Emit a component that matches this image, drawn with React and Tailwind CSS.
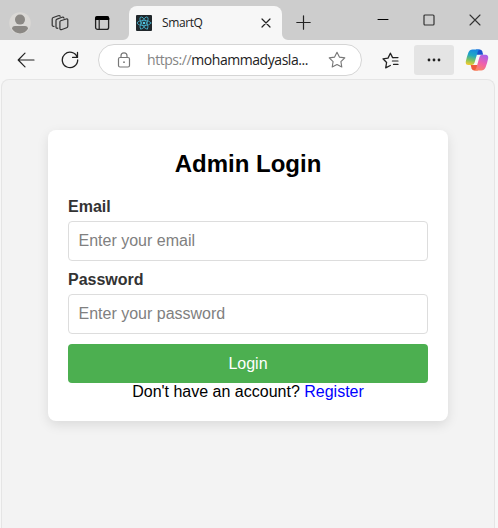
import React from "react";

function Icon({ w, h, className = "", children }) {
  return (
    <svg
      width={w}
      height={h}
      viewBox={`0 0 ${w} ${h}`}
      fill="none"
      stroke="currentColor"
      strokeLinecap="round"
      strokeLinejoin="round"
      className={"shrink-0 " + className}
    >
      {children}
    </svg>
  );
}

function Avatar() {
  return (
    <Icon w={22} h={22} className="ml-[9px]">
      <circle cx="11" cy="11" r="10.8" fill="#dad8d5" stroke="none" />
      <circle cx="11" cy="7.6" r="5" fill="#8b8884" stroke="none" />
      <path d="M3 16.8Q3 13.9 6 13.9h10q3 0 3 2.9A10.5 10.5 0 0 1 11 21.6a10.5 10.5 0 0 1-8-4.8Z" fill="#8b8884" stroke="none" />
    </Icon>
  );
}

function Workspaces() {
  return (
    <Icon w={18} h={18} className="ml-5 text-[#333]">
      <path d="M9.7 6.8 15.2 5q1.600-.4 1.600 1.100v6.200q0 1.100-1.100 1.500l-4.800 1.700q-2 .6-2-1.100V8.100q0-1 .8-1.300Z" strokeWidth="1.200" />
      <path d="M6.800 14.200q-1.800.4-1.800-1.300V6.600q0-1.100 1.100-1.500l4.900-1.800q1.500-.5 2 .8" strokeWidth="1.200" />
      <path d="M3 12.300q-1.800.3-1.800-1.300V5q0-1.100 1.100-1.500l4.900-1.800q1.500-.5 2 .6" strokeWidth="1.200" />
    </Icon>
  );
}

function TabsMenu() {
  return (
    <Icon w={16} h={16} className="ml-[25px] text-[#222]">
      <rect x="1.6" y="1.6" width="13" height="12.8" rx="2" strokeWidth="1.3" />
      <path d="M1 5V3.2Q1 1 3.2 1H13q2.200 0 2.200 2.200V5Z" fill="#000" stroke="none" />
      <path d="M5.200 5v9" strokeWidth="1.200" />
    </Icon>
  );
}

function ReactLogo() {
  return (
    <Icon w={16} h={16} className="ml-[7px]">
      <rect width="16" height="16" rx="1" fill="#20272b" stroke="none" />
      <g stroke="#48b5d0" strokeWidth="0.8">
        <ellipse cx="8" cy="8" rx="6.8" ry="2.6" />
        <ellipse cx="8" cy="8" rx="6.8" ry="2.6" transform="rotate(60 8 8)" />
        <ellipse cx="8" cy="8" rx="6.8" ry="2.6" transform="rotate(120 8 8)" />
      </g>
      <circle cx="8" cy="8" r="1.3" fill="#53c8e4" stroke="none" />
    </Icon>
  );
}

function Tab() {
  return (
    <div className="relative ml-[19px] mt-1.5 flex h-[34px] w-[153px] shrink-0 items-center rounded-t-lg bg-[#f7f7f7]">
      <svg className="absolute bottom-0 -left-1.5" width="6" height="6"><path d="M6 0v6H0a6 6 0 0 0 6-6Z" fill="#f7f7f7" /></svg>
      <svg className="absolute -right-1.5 bottom-0" width="6" height="6"><path d="M0 0v6h6a6 6 0 0 1-6-6Z" fill="#f7f7f7" /></svg>
      <ReactLogo />
      <span className="ml-2.5 w-[99px] font-['Open_Sans',sans-serif] text-[12px] leading-4 tracking-[-0.4px] text-[#222]">SmartQ</span>
      <Icon w={10} h={10} className="text-[#222]">
        <path d="m1 1 8 8M9 1 1 9" strokeWidth="1.2" />
      </Icon>
    </div>
  );
}

function TitleBar() {
  return (
    <div className="flex h-10 bg-[#cdcdcd]">
      <div className="flex h-[46px] items-center">
        <Avatar />
        <Workspaces />
        <TabsMenu />
      </div>
      <Tab />
      <div className="flex h-11 items-center">
        <Icon w={15} h={15} className="ml-3.5 text-[#222]">
          <path d="M7.5.8v13.400M.8 7.500h13.400" strokeWidth="1.2" />
        </Icon>
      </div>
      <div className="ml-auto mr-[17px] flex h-[39px] items-center text-[#333]">
        <Icon w={12} h={12} className="mr-[34px] text-black"><path d="M1 5.500h10" /></Icon>
        <Icon w={12} h={12} className="mr-[34px]"><rect x="1" y="1" width="10" height="10" rx="1" strokeWidth="1.2" /></Icon>
        <Icon w={12} h={12}><path d="m1 1 10 10M11 1 1 11" strokeWidth="1.1" /></Icon>
      </div>
    </div>
  );
}

function Copilot() {
  return (
    <svg width="24" height="22" viewBox="0 0 24 22" className="ml-[11px] shrink-0">
      <defs>
        <linearGradient id="cpLeft" x1="0.6" y1="0" x2="0.4" y2="1">
          <stop offset="0" stopColor="#1687e4" />
          <stop offset="0.4" stopColor="#22a8c0" />
          <stop offset="0.7" stopColor="#7cc162" />
          <stop offset="1" stopColor="#eecb30" />
        </linearGradient>
        <linearGradient id="cpRight" x1="0.7" y1="0" x2="0.3" y2="1">
          <stop offset="0" stopColor="#a960ea" />
          <stop offset="0.5" stopColor="#ee5fae" />
          <stop offset="1" stopColor="#fb8560" />
        </linearGradient>
      </defs>
      <path d="M11 .5h3.700q2 0 2.600 2l.9 3.300h-6.700Z" fill="#1b52cf" />
      <path d="M12.800 21.500H9.200q-2 0-2.600-2L5.700 15.900h7Z" fill="#ef5a3c" />
      <path d="M7.500.5h7.400q-1.500.4-2.200 2.600L9.500 13.700Q8.800 16 6.600 16H3.500Q.2 16 .8 12.500 1.600 8.500 3.400 3.600 4.600.5 7.500.5Z" fill="url(#cpLeft)" />
      <path d="M16.300 21.500H9q1.600-.4 2.300-2.600L14.500 8q.7-2.300 2.900-2.300h3.100q3.100 0 2.700 3.600-.8 4.300-2.700 9.200-1.300 3-4.200 3Z" fill="url(#cpRight)" />
    </svg>
  );
}

function Toolbar() {
  return (
    <div className="flex h-[39px] items-center bg-[#f7f7f7] text-[#222]">
      <Icon w={18} h={16} className="ml-[17px]">
        <path d="M17 8H1.2M8 1.2 1.2 8 8 14.800" strokeWidth="1.2" />
      </Icon>
      <Icon w={18} h={18} className="ml-[26px]">
        <path d="M16.2 6.2A7.7 7.7 0 1 0 16.7 9M16.5 1.5v4.900h-4.900" strokeWidth="1.3" />
      </Icon>
      <div className="mt-px ml-[19px] flex h-8 w-[264px] shrink-0 items-center rounded-full border border-[#d5d5d5] bg-white">
        <Icon w={14} h={16} className="ml-[18px] text-[#777]">
          <rect x="1.5" y="5.5" width="11" height="9.5" rx="1.5" strokeWidth="1.2" />
          <path d="M4 5.500V3.800a3 3 0 0 1 6 0v1.700" strokeWidth="1.2" />
          <circle cx="7" cy="10.2" r=".9" fill="currentColor" stroke="none" />
        </Icon>
        <span className="ml-4 w-[181px] whitespace-nowrap font-['Open_Sans',sans-serif] text-[14px] leading-5 tracking-[-0.44px] text-[#222]">
          <span className="text-[#858585]">https://</span>mohammadyasla...
        </span>
        <Icon w={18} h={17} className="-mt-px text-[#777]">
          <path d="m9 1.200 2.400 4.900 5.400.8-3.900 3.800.9 5.300L9 13.500 4.200 16l.9-5.300-3.900-3.800 5.400-.8Z" strokeWidth="1.1" />
        </Icon>
      </div>
      <Icon w={18} h={17} className="mt-0.5 ml-5">
        <path d="M11.500 5.600h-.9L8.400 1.200 6 6.100l-5 .7 3.600 3.700-.9 5.400 4.600-2.400" strokeWidth="1.3" />
        <path d="M11.500 5.600H16M10.400 9H16M11.500 12.400H16" strokeWidth="1.2" />
      </Icon>
      <div className="mt-px ml-3.5 flex h-[30px] w-10 shrink-0 items-center justify-center rounded-[3px] bg-[#e4e4e4]">
        <svg width="14" height="4"><g fill="#222"><circle cx="2" cy="2" r="1.4" /><circle cx="7" cy="2" r="1.4" /><circle cx="12" cy="2" r="1.4" /></g></svg>
      </div>
      <Copilot />
    </div>
  );
}

function Field({ id, label, type, placeholder }) {
  return (
    <div className="mb-[9px] flex flex-col">
      <label htmlFor={id} className="mb-[5px] text-[16px] leading-[19px] font-bold text-[#333]">{label}</label>
      <input
        id={id}
        type={type}
        placeholder={placeholder}
        className="h-10 w-full rounded-[4px] border border-[#ddd] bg-white px-[9.5px] text-[16px] outline-none placeholder:text-[#808080]"
      />
    </div>
  );
}

function LoginCard() {
  return (
    <form className="h-[291px] w-[400px] rounded-lg bg-white px-5 pt-[18px] shadow-[0_4px_12px_rgba(0,0,0,0.1)]">
      <h2 className="mb-[17px] text-center text-[24px] leading-8 font-bold">Admin Login</h2>
      <Field id="email" label="Email" type="email" placeholder="Enter your email" />
      <Field id="password" label="Password" type="password" placeholder="Enter your password" />
      <button type="button" className="mt-2.5 block h-[39px] w-full rounded-[4px] bg-[#4caf50] text-[16px] text-white">Login</button>
      <p className="text-center text-[16px] leading-[18px]">
        Don't have an account? <a href="#register" className="text-[#00f]">Register</a>
      </p>
    </form>
  );
}

export default function App() {
  return (
    <div className="flex h-[528px] w-[498px] flex-col overflow-hidden bg-[#f7f7f7] font-['Liberation_Sans',Arial,sans-serif] text-black">
      <TitleBar />
      <Toolbar />
      <main className="mr-[3px] ml-px flex flex-1 items-start rounded-t-lg border border-b-0 border-[#e5e5e5] bg-[#f3f3f3] pt-[50px] pl-[46px]">
        <LoginCard />
      </main>
    </div>
  );
}
